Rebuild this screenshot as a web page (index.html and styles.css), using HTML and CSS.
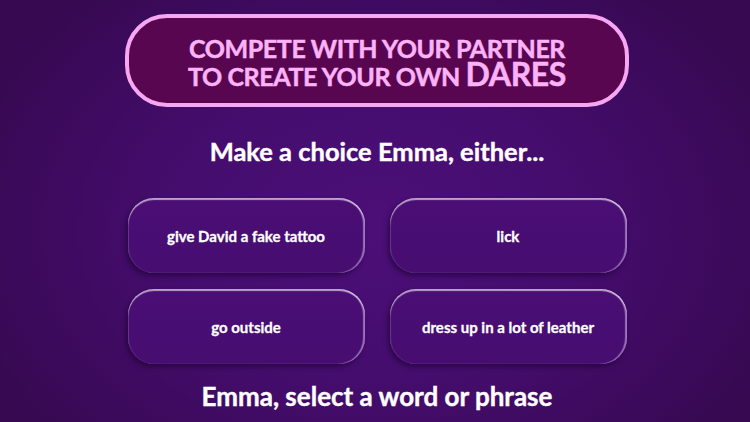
FILE: index.html
```html
<!DOCTYPE html>
<html>
<head>
<meta charset="utf-8">
<link rel="stylesheet" href="styles.css">
</head>
<body>
<div class="screen">
  <div class="banner">
    <div class="banner-line">COMPETE WITH YOUR PARTNER</div>
    <div class="banner-line">TO CREATE YOUR OWN <span class="big">DARES</span></div>
  </div>
  <h1 class="prompt">Make a choice Emma, either...</h1>
  <div class="choices">
    <div class="choice">give David a fake tattoo</div>
    <div class="choice">lick</div>
    <div class="choice">go outside</div>
    <div class="choice">dress up in a lot of leather</div>
  </div>
  <h2 class="footer">Emma, select a word or phrase</h2>
</div>
</body>
</html>
```
FILE: styles.css
```css
html, body {
  margin: 0;
  padding: 0;
}
body {
  width: 750px;
  height: 422px;
  overflow: hidden;
  background: #3a0a4f;
  font-family: Lato, "Open Sans", sans-serif;
}
.screen {
  width: 750px;
  height: 422px;
  box-sizing: border-box;
  padding: 14px 0 0 4px;
  display: flex;
  flex-direction: column;
  align-items: center;
  background: radial-gradient(ellipse 440px 320px at 375px 230px, #4c0f78 0%, #450d6e 45%, #3c0a5c 80%, #370950 100%);
}
.banner {
  width: 504px;
  height: 93px;
  box-sizing: border-box;
  border: 4px solid #f7a6f2;
  border-radius: 42px;
  background: #58064f;
  color: #fbb2f6;
  display: flex;
  flex-direction: column;
  align-items: center;
  justify-content: center;
  padding-top: 2px;
  font-weight: 700;
  letter-spacing: -0.4px;
  -webkit-text-stroke: 0.5px #fbb2f6;
}
.banner-line {
  font-size: 25px;
  line-height: 26px;
}
.banner-line .big {
  font-size: 32px;
  line-height: 26px;
}
.prompt {
  margin: 29px 0 0 0;
  font-size: 25.5px;
  line-height: 30px;
  font-weight: 700;
  color: #fff;
  -webkit-text-stroke: 0.4px #fff;
}
.choices {
  margin-top: 32px;
  display: grid;
  grid-template-columns: 237px 237px;
  grid-template-rows: 75px 75px;
  column-gap: 25px;
  row-gap: 16px;
}
.choice {
  display: flex;
  align-items: center;
  justify-content: center;
  border-radius: 26px;
  background: linear-gradient(180deg, #4a0e75 0%, #470d70 100%);
  color: #fff;
  font-size: 15px;
  font-weight: 700;
  -webkit-text-stroke: 0.3px #fff;
  box-shadow:
    inset 0 2px 1px rgba(255,255,255,0.6),
    inset -2px 0 1px rgba(235,205,255,0.5),
    inset 1px 0 1px rgba(255,255,255,0.12),
    -2px 3px 5px rgba(25,0,45,0.55);
}
.footer {
  margin: 17px 0 0 0;
  font-size: 26px;
  line-height: 30px;
  font-weight: 700;
  color: #fff;
  -webkit-text-stroke: 0.4px #fff;
}
```
